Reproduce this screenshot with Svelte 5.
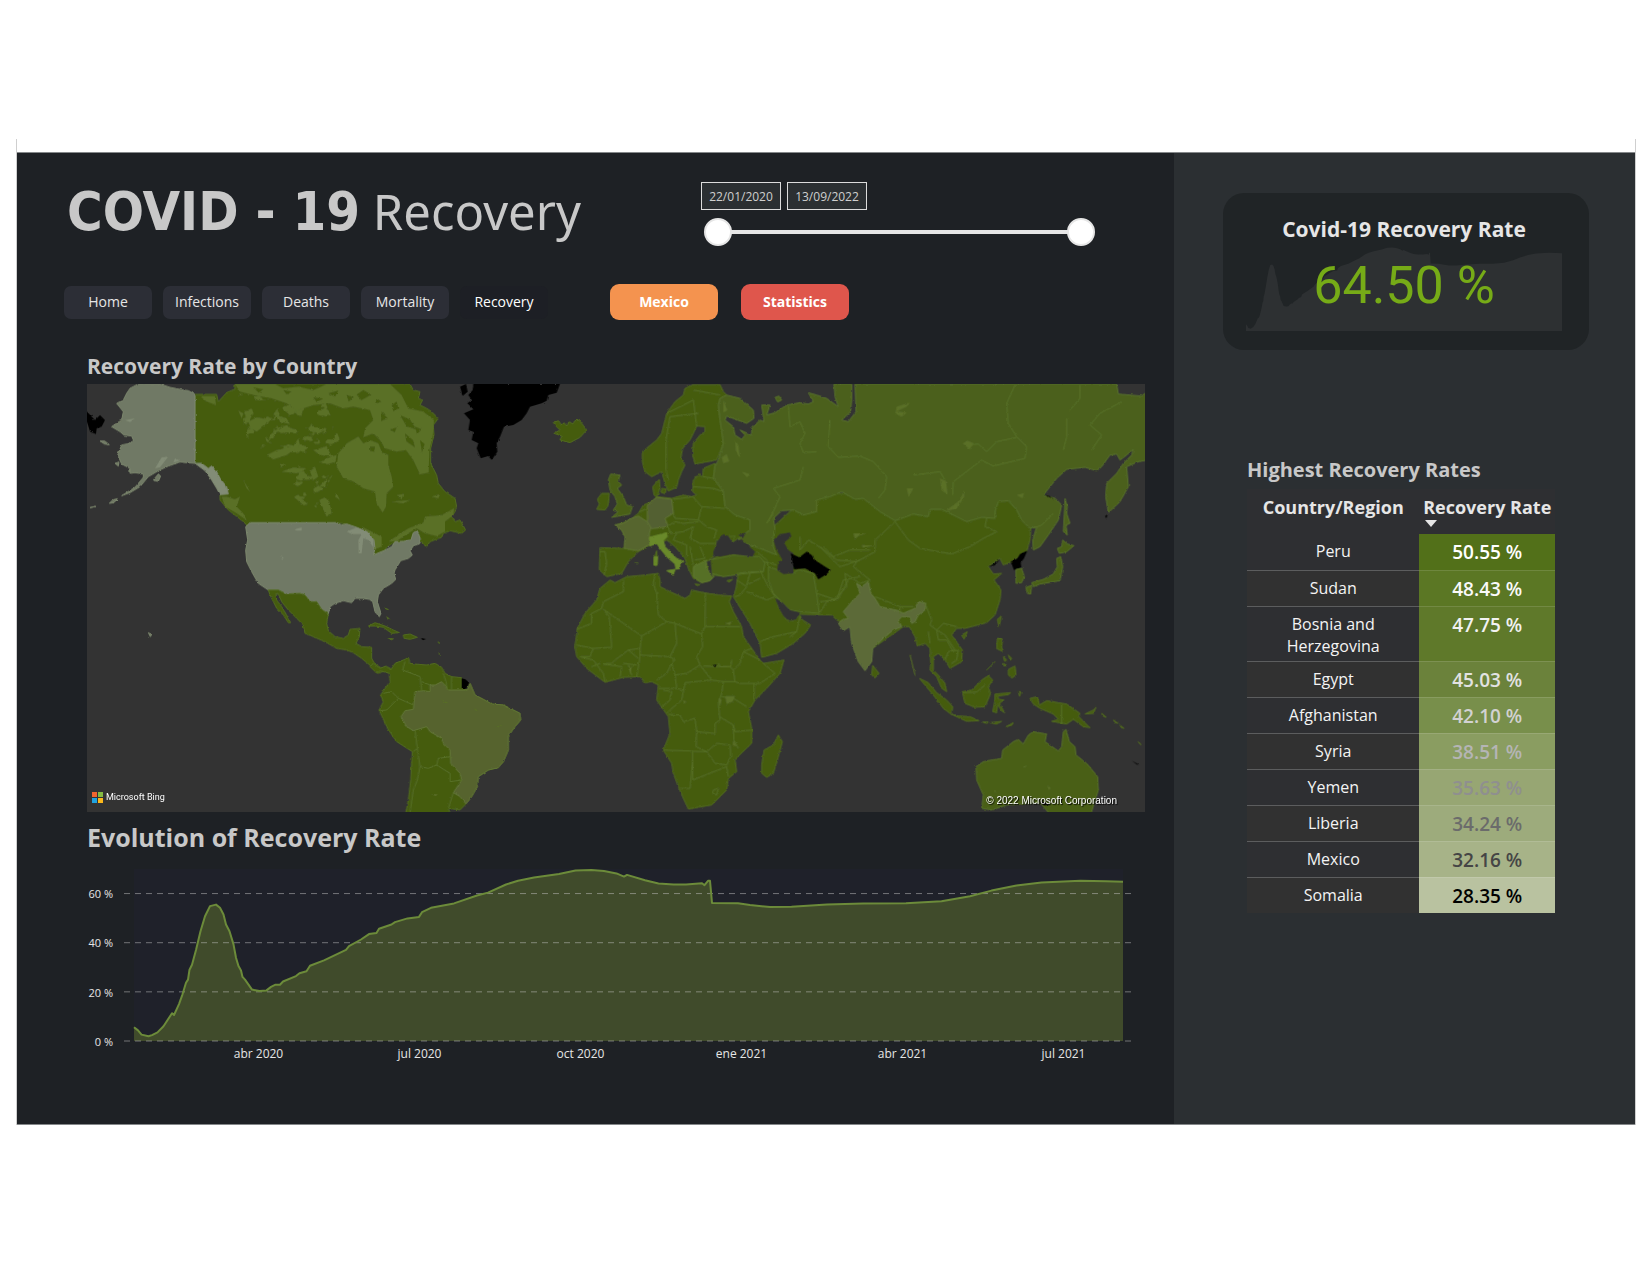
<script>
  const pages = ['Home', 'Infections', 'Deaths', 'Mortality', 'Recovery'];
  let active = $state('Recovery');
  let from = $state(0);
  let to = $state(100);

  const rates = [
    { name: 'Peru', rate: '50.55 %', tone: 't1' },
    { name: 'Sudan', rate: '48.43 %', tone: 't2' },
    { name: 'Bosnia and Herzegovina', rate: '47.75 %', tone: 't3' },
    { name: 'Egypt', rate: '45.03 %', tone: 't4' },
    { name: 'Afghanistan', rate: '42.10 %', tone: 't5' },
    { name: 'Syria', rate: '38.51 %', tone: 't6' },
    { name: 'Yemen', rate: '35.63 %', tone: 't7' },
    { name: 'Liberia', rate: '34.24 %', tone: 't8' },
    { name: 'Mexico', rate: '32.16 %', tone: 't9' },
    { name: 'Somalia', rate: '28.35 %', tone: 't10' }
  ];

  // [position along the period, recovery rate in percent]
  const series = [
    [0, 5.6], [4, 4.3], [7.5, 2.6], [14.5, 1.9], [18, 2.4], [23.5, 3.5], [29.5, 6], [38, 11.3], [40, 10.6], [45, 15],
    [48.5, 19], [52, 23.7], [54, 25], [55.5, 29], [58, 31], [62, 37], [66.5, 44.7], [71, 50.8], [76, 54.9], [82, 55.5],
    [86, 54.2], [89.5, 51.5], [92, 47.4], [95.5, 44.7], [99.5, 39.3], [102, 33.9], [104.5, 30.5], [107, 28.7],
    [108.5, 26.1], [111, 25], [118, 20.9], [125.5, 20.3], [132.5, 20.6], [137, 22], [141.5, 22.9], [146, 22.9],
    [149, 24.2], [162, 26.4], [165.5, 27.6], [172.5, 28.4], [176, 30.6], [190, 32.8], [212, 37.1], [215, 38.6],
    [227, 41.3], [235, 43.5], [242.5, 44], [245, 45.7], [257.5, 47.4], [261, 48.4], [273.5, 49.9], [285, 50.5],
    [288, 52.4], [297, 54.2], [320, 56], [343, 59.2], [354, 60.4], [372, 63.7], [384, 65.2], [400, 66.5], [425, 68],
    [441.5, 69.4], [457.5, 69.6], [470, 69.2], [482.5, 68.2], [490, 66.9], [493, 67.6], [511, 65.4], [524.5, 64.1],
    [539.5, 63.7], [552, 63.7], [568, 64.2], [570.5, 63.4], [574, 65.2], [576, 65.2], [578, 56.2], [604, 56.1],
    [616, 55.4], [636, 54.5], [657.5, 54.6], [693, 55.5], [729, 56], [772, 56.1], [807.5, 56.9], [836, 58.9],
    [857.5, 61.2], [882.5, 63.3], [907.5, 64.5], [946.5, 65.2], [972, 65], [989, 64.8]
  ];
  const trace = (h, max) =>
    series.map(([x, v], i) => `${i ? 'L' : 'M'}${x} ${(h - (v * h) / max).toFixed(1)}`).join('');
  const area = (h, max) => `${trace(h, max)}V${h}H0Z`;
  const gridRows = [60, 40, 20, 0];
  const months = ['abr 2020', 'jul 2020', 'oct 2020', 'ene 2021', 'abr 2021', 'jul 2021'];
</script>

<div class="page">
  <div class="frame">
    <div class="dashboard">
      <main>
        <header>
          <h1><strong>COVID - 19</strong> <span>Recovery</span></h1>
          <div class="period">
            <div class="dates">
              <input type="text" aria-label="Start date" value="22/01/2020" />
              <input type="text" aria-label="End date" value="13/09/2022" />
            </div>
            <div class="slider">
              <input type="range" aria-label="Period start" min="0" max="100" bind:value={from} />
              <input type="range" aria-label="Period end" min="0" max="100" bind:value={to} />
            </div>
          </div>
        </header>

        <nav>
          {#each pages as page}
            <button class="tab" class:active={active === page} onclick={() => (active = page)}>{page}</button>
          {/each}
          <button class="action mexico">Mexico</button>
          <button class="action statistics">Statistics</button>
        </nav>

        <section class="panel">
          <h2>Recovery Rate by Country</h2>
          <div class="map">
            <svg viewBox="0 0 3174 1284" preserveAspectRatio="xMidYMid slice" role="img" aria-label="World map of recovery rates">
              <defs>
                <filter id="coast" x="0" y="0" width="3174" height="1284" filterUnits="userSpaceOnUse">
                  <feTurbulence type="fractalNoise" baseFrequency="0.09" numOctaves="2" seed="4" result="n" />
                  <feDisplacementMap in="SourceGraphic" in2="n" scale="7" xChannelSelector="R" yChannelSelector="G" />
                </filter>
                <filter id="tundra" color-interpolation-filters="sRGB">
                  <feTurbulence type="fractalNoise" baseFrequency="0.025 0.035" numOctaves="3" seed="11" />
                  <feColorMatrix values="0 0 0 0 0.353  0 0 0 0 0.435  0 0 0 0 0.157  14 0 0 0 -8.2" />
                  <feComposite in2="SourceAlpha" operator="in" />
                </filter>
              </defs>
              <rect width="3174" height="1284" fill="#333333" />
              <g filter="url(#coast)">
                <!-- North America -->
                <g transform="translate(-21 -132)">
                  <path class="land" d="M345 163L410 163L415 185L440 158L465 147L465 132L990 132L1000 150L1020 155L1015 175L1028 180L1020 195L1040 205L1055 215L1075 235L1060 255L1062 285L1052 325L1052 370L1070 405L1075 430L1095 455L1125 475L1130 500L1125 515L1115 530L1125 545L1140 540L1157 570L1145 580L1110 572L1090 580L1085 592L1050 605L1040 620L1028 612L1015 575L1000 578L993 600L970 604L945 605L920 622L912 632L880 645L885 625L880 600L860 575L830 565L800 552L770 548L510 548L505 560L490 545L465 525L445 510L420 480L420 464L445 462L440 440L420 415L410 395L395 378L385 385L365 370L345 370Z" />
                  <path filter="url(#tundra)" d="M470 145L720 145L780 300L760 400L700 520L640 470L600 380L500 290Z" />
                  <g class="lake">
                    <path d="M835 290L850 310L870 300L895 310L905 335L925 345L925 375L935 410L940 440L920 460L918 500L908 518L890 490L885 455L850 445L820 425L790 415L770 380L775 340L800 310Z" />
                    <path d="M465 132L585 132L610 145L655 140L700 150L740 132L930 132L965 165L985 205L1030 215L1062 240L1058 290L1048 330L1046 398L1020 403L1000 360L978 330L950 335L915 325L900 300L880 280L850 292L855 265L880 240L870 210L820 200L790 205L750 190L700 195L650 212L620 190L575 175L520 165L480 155Z" />
                    <path d="M505 245L530 232L565 238L555 255L530 275L512 265Z M560 345L590 330L640 318L655 295L660 315L620 345L580 358Z M475 212L490 220L485 235Z M605 395L640 382L680 385L650 400Z M555 290L575 310L560 305Z M590 225L620 235L630 252L600 245Z M690 395L705 380L715 410L700 420Z M718 480L735 472L748 485L755 520L740 530L728 505Z M718 440L742 415L735 440Z M480 470L465 478L440 470L425 470L435 500L470 520L500 540L490 520L470 500Z M490 420L510 455L500 445Z M700 330L740 318L755 350L720 345Z M950 465L970 462L965 478Z M935 485L990 480L970 490Z M1055 470L1080 462L1075 475Z M360 168L405 168L408 195L380 185Z M750 350L770 345L765 370Z M770 460L780 480L765 470Z" />
                    <path d="M925 605L985 565L1030 548L1035 530L1085 525L1122 505L1120 525L1095 545L1095 575L1070 588L1035 580L1010 565L985 580L950 603Z M845 560L905 590L905 620L885 628L880 600Z" />
                  </g>
                  <path class="dark" d="M935 195l15-10l5 20l-15 8z M870 320l15 0l-2 15l-12-2z M745 160l30-8l-10 18z M610 150l25 5l-15 8z M930 268l20-5l-6 14z M905 325l10 5l-8 10z M1005 260l20 8l-14 14z M700 172l30 4l-20 10z M850 150l24 14l-30 16l-14-16z M800 165l22 6l-16 14z M905 215l18 20l-20 8z M960 225l30 14l20 30l-30-10z M975 280l24 20l6 22l-26-18z M520 142l30 6l-14 10z M890 175l14 10l-18 6z M1020 300l14 12l-8 24z" />
                  <path class="usa" d="M150 145L175 132L240 132L270 142L310 150L325 152L345 163L345 370L300 366L265 378L235 392L205 410L180 440L150 458L125 467L165 442L190 412L190 402L165 398L150 400L150 385L125 372L113 345L125 315L150 310L160 300L155 288L132 285L120 275L95 260L125 240L130 215L110 190L130 180L140 160Z" />
                  <path class="usa" d="M220 420L235 402L242 408L235 424Z M88 490l10-10l14-4l-10 12z M60 303l14 0l14 11l-14-2z M105 370l12-4l-2 12z M30 503l16-4z M205 878l10 6l-4 6z" />
                  <path class="usa glacier" d="M345 370L365 370L385 385L395 378L410 395L420 415L440 440L445 462L420 464L410 445L395 420L375 392Z" />
                  <path class="usa" d="M510 548L770 548L785 555L800 552L830 562L860 575L882 600L885 625L880 645L912 632L935 620L945 605L970 604L993 600L1000 578L1012 572L1020 595L1020 610L1000 618L990 632L997 645L985 655L962 662L945 690L942 700L947 718L935 730L910 745L895 765L892 785L903 820L898 830L885 815L878 785L868 778L850 775L825 775L815 788L790 782L765 790L750 800L745 822L725 808L710 785L690 785L675 765L660 760L620 762L595 750L565 750L535 730L515 695L500 665L497 630L503 600L497 560Z" />
                  <path class="glacier" d="M800 575L830 562L862 575L880 598L880 622L865 600L850 595L845 640L836 640L835 600L845 582L815 582Z M643 568L665 562L665 572L650 572Z M600 645L612 655L606 656Z M225 385L245 352L265 350L240 382Z M285 355L300 362L280 368Z M135 240L165 235L150 246Z" />
                  <path class="land" d="M565 750L595 750L620 762L660 760L675 765L690 785L710 785L725 808L745 822L740 850L745 872L765 890L790 895L805 885L810 868L840 865L838 890L828 910L845 920L875 922L875 955L885 972L905 985L925 982L940 990L935 1002L915 992L895 1000L875 980L845 955L820 938L800 930L770 925L735 905L700 890L675 880L670 855L650 835L625 810L605 785L597 765L588 760L590 780L605 800L620 825L632 848L625 848L610 825L590 805L580 785L570 765Z" />
                  <path fill="#000" d="M21 215L45 240L60 225L75 240L65 260L50 265L48 282L30 275L21 245Z M165 858l14 4z" />
                </g>

                <!-- Atlantic and South America -->
                <g transform="translate(819 -12)">
                  <path class="land" d="M25 738L45 728L75 738L100 750L118 758L95 760L70 742L45 738Z M130 765L150 762L172 772L150 778L132 775Z M85 776L100 776L95 780Z M75 685l10 4z M80 710l8 8z M235 785l3 6z M236 820l4 4z" />
                  <path fill="#000" d="M340 12L600 12L590 38L565 45L560 62L545 70L510 80L500 100L485 120L460 135L432 140L420 170L410 190L412 215L395 240L385 228L362 235L350 205L355 190L335 180L340 155L325 150L330 120L312 100L340 88L322 70L335 60L325 45L338 30Z M300 20L318 12L323 35L308 48Z M183 774L198 777L188 781Z M175 733l14 6z" />
                  <path class="land" d="M580 128L595 122L605 135L612 128L620 138L628 125L638 132L645 122L658 120L665 130L680 150L660 172L630 188L600 180L605 168L582 160L600 150L590 140Z" />
                  <path class="land" d="M92 870L105 850L135 838L145 832L150 850L165 852L200 855L225 850L245 862L255 880L275 890L305 893L305 925L322 930L330 910L345 945L370 958L395 972L430 975L460 990L480 1000L482 1020L465 1040L445 1068L445 1110L430 1145L415 1163L385 1170L355 1190L352 1220L335 1250L315 1275L300 1290L265 1285L275 1310L135 1310L145 1260L152 1200L157 1115L110 1085L85 1050L57 990L70 965L62 945L75 925L90 905L88 880L60 872L50 880L30 860L40 850L60 865L78 858Z" />
                  <path class="brazil" d="M225 915L245 905L258 918L262 930L322 930L330 910L345 945L370 958L395 972L430 975L460 990L480 1000L482 1020L465 1040L445 1068L445 1110L430 1145L415 1163L385 1170L355 1190L352 1220L335 1250L318 1272L300 1250L280 1238L305 1200L300 1180L272 1150L270 1110L250 1090L245 1075L210 1055L200 1040L160 1052L140 1040L123 1010L135 992L160 988L165 935L190 932L210 935L210 915Z" />
                  <path class="line" d="M135 845L128 870L180 890L185 930 M70 940L95 935L115 955L80 990L60 992 M115 955L160 975 M165 1050L172 1105L160 1115 M172 1105L180 1160L205 1165L230 1155L235 1135L270 1130 M180 1160L172 1200L160 1230L150 1297 M230 1155L270 1180L270 1205L305 1200 M262 930L258 905L250 880 M275 890L275 928 M280 1238L265 1285 M185 905L210 915" />
                  <path class="lake" d="M240 958l25 10l-8 2z M340 984l12 6l-3 4z M408 1040l20-6l-10 8z M215 1243l18 0l-6 6z" />
                  <path fill="#000" d="M305 895L316 898L328 908L318 926L305 925Z" />
                </g>

                <!-- Europe, Middle East and Asia -->
                <g transform="translate(2139 528)">
                  <path class="land" d="M-80 -100L30 -200L700 -200L690 -60L680 -25L635 5L610 15L600 -5L565 20L580 42L605 40L582 60L603 90L600 120L585 165L560 188L495 205L470 205L455 225L487 270L485 305L450 325L435 300L415 280L400 290L400 330L415 345L435 370L440 395L425 385L410 350L390 330L392 310L390 265L375 250L352 258L345 230L328 200L310 200L218 265L180 300L150 200L110 180L95 165L5 163L-20 158L-50 130L-72 112L-65 140L-50 165L-40 180L-20 182L0 165L5 178L32 195L15 220L-20 250L-70 280L-115 292L-120 250L-150 190L-175 150L-200 110L-192 85L-185 40L-230 48L-265 45L-275 10L-260 -5L-240 -15L-160 -30Z" />
                </g>
                <g transform="translate(1419 -12)">
                  <path class="land" d="M375 25L400 14L480 14L490 35L500 45L480 55L475 75L480 120L485 150L490 190L470 240L405 252L398 225L400 190L420 165L435 155L435 140L410 138L400 160L390 180L368 205L362 235L375 255L365 275L355 300L350 322L325 333L315 310L305 275L275 290L255 275L247 245L247 215L290 180L305 160L320 100L345 65L370 45Z" />
                  <path class="land" d="M278 320L298 298L300 325L290 352L282 345Z M305 325l14 2l-4 14l-12-4z M405 290L425 290L422 310L408 300Z" />
                  <path class="land" d="M465 250L430 265L428 290L415 285L400 300L398 335L410 345L395 350L370 345L335 355L310 352L290 350L275 365L250 375L235 400L215 415L190 428L165 435L185 450L195 470L193 505L120 503L118 570L140 590L185 580L205 545L235 515L270 495L300 490L320 480L345 500L375 535L385 565L400 595L425 608L450 602L462 590L445 575L440 545L460 530L470 480L520 485L570 450L570 420L525 400L495 380L490 335L460 295Z" />
                  <path class="russia" d="M480 55L500 45L540 55L580 90L582 115L560 130L500 108L495 120L520 140L525 165L545 178L555 165L540 150L575 165L575 145L600 120L612 125L605 75L630 75L620 105L645 98L680 75L720 68L745 72L760 65L745 38L770 45L800 55L835 80L825 50L822 12L875 12L875 60L872 95L845 120L865 125L888 95L885 12L1670 12L1675 42L1745 48L1755 40L1765 40L1765 240L1735 245L1700 260L1705 320L1680 365L1645 398L1637 350L1640 310L1670 280L1690 250L1715 225L1720 208L1700 225L1680 240L1670 222L1650 225L1625 260L1610 272L1575 262L1520 268L1490 295L1450 345L1485 355L1505 375L1495 420L1465 465L1440 500L1420 510L1418 480L1430 440L1410 445L1385 420L1370 390L1345 362L1315 365L1305 395L1305 415L1265 412L1220 425L1190 410L1145 388L1110 388L1105 410L1060 402L1005 422L960 395L910 355L885 358L845 335L810 350L770 360L770 395L730 405L700 390L665 392L640 415L645 445L640 470L640 500L650 525L600 505L555 490L535 478L555 460L570 450L570 420L525 405L495 380L490 335L460 295L465 258L475 240L490 190L480 120L475 75Z" />
                  <path class="russia" d="M645 52l12-4l8 12l-12 6z M1515 355L1522 380L1520 400L1530 430L1518 435L1522 465L1510 455L1513 400Z" />
                  <path class="line" d="M685 80L690 140L720 125L735 160L720 190L730 218L770 215 M810 120L805 200L835 232L900 228L940 245L980 290L975 330L955 355 M1365 15L1340 70L1345 130L1370 170L1400 200L1395 235L1300 258L1265 240L1180 305L1178 345 M1370 172L1310 185L1280 215L1255 192L1225 195 M1560 15L1560 55L1530 90 M1520 115L1520 170L1510 210 M1685 65L1620 100L1590 135L1625 165L1595 210 M1060 285L1140 275L1155 300 M640 400L620 430 M660 350L640 325L720 300L730 260 M660 350L640 395L620 430" />
                  <path class="lake" d="M485 232l15-10l8 22l-18 6z M525 180l10 15l5 40l-12-20z M545 275l26 8l-10 8z M490 60l12 30l-12 8z M1208 190l15-8l18 8l-12 18z M1140 295l18 8l5 40l-18-12z M1160 390L1200 360L1213 330L1212 352L1190 385L1165 392Z M1370 345l22-6l-4 16z M1010 80l40-12l-10 12l-30 14l30 4l-14 12l-20-8z M1010 35l12 20z M1040 325l20 0l-14 26z M880 460l40 0l-22 6l-14 12z M905 495l40 2l-36 6z" />
                  <path class="uk" d="M152 282L180 285L175 305L185 315L172 325L190 350L200 375L217 380L210 402L155 412L175 395L160 390L172 372L165 350L150 330L145 300Z" />
                  <path class="land" d="M125 340L148 340L145 375L135 390L110 388L118 372L112 358Z M505 470L525 468L518 486Z M282 535L290 512L292 555L282 555Z M330 573L345 568L340 583Z M500 602L518 598L508 606Z M405 612L420 614L410 617Z M225 548l10 2z" />
                  <path class="france" d="M165 435L190 430L215 415L235 408L262 425L275 435L268 460L270 492L235 512L193 505L195 470L185 450Z" />
                  <path class="germany" d="M262 375L290 352L335 358L340 400L315 415L325 440L275 446L262 425Z" />
                  <path class="italy" d="M268 472L320 458L322 470L310 482L315 500L350 535L372 545L360 548L360 565L348 568L345 552L320 530L300 505L290 490L270 498Z M282 530L293 530L291 556L282 556Z M320 572L345 568L340 583Z" />
                  <path class="iran" d="M448 540L520 525L600 530L615 548L610 575L545 582L490 590L455 580Z" />
                  <path class="iran" d="M625 560L655 570L700 580L715 568L760 580L770 640L778 700L720 695L690 690L660 660L640 640L625 600Z" />
                  <path class="greece" d="M400 560L440 540L438 565L462 590L450 602L425 608L400 590Z" />
                  <path class="line" d="M415 100L330 110L318 180L318 270L325 300 M320 100L400 60L410 140 M400 30L480 45 M135 515L140 550L132 585 M120 515L135 515 M225 512L193 505 M240 395L262 385 M340 358L398 350L425 380L415 420L345 415L340 400 M400 320L460 325L490 335 M430 290L460 295 M425 380L495 385 M415 420L440 440L470 450L462 475 M320 440L345 425L370 430L415 425 M325 440L330 460L370 455L400 440L390 475L420 490L465 490 M350 460L340 480L380 495L380 530 M390 500L400 555 M420 500L435 535L405 540 M590 515L620 540L625 560 M610 545L650 555 M535 580L570 575L610 575 M530 600L560 620L540 645L525 650 M570 580L560 615L600 595 M600 570L625 620L645 650L620 660L560 635 M770 640L830 660L850 600L900 590 M778 700L800 665L835 655L865 600 M720 470L720 510L745 480L785 505L840 560L900 540 M600 785L640 770L710 755L720 710 M690 770L710 755" />
                  <path fill="#333333" d="M460 515L475 480L490 462L505 468L518 488L545 478L560 492L585 515L578 530L520 522L480 530L460 525Z M640 480L660 462L690 458L694 470L672 488L685 510L700 520L700 580L670 582L652 570L655 545L668 540L650 510Z M535 465L558 458L548 475Z M440 545L452 542L456 585L465 600L450 580Z M645 655L665 665L690 690L720 698L708 718L690 722L672 710L660 690Z" />
                  <path fill="#000" d="M692 520L718 532L740 515L755 525L765 540L795 560L812 570L800 582L775 598L765 580L735 565L702 568Z" />
                </g>
                <g transform="translate(2199 -12)">
                  <path class="line" d="M225 425L265 480L300 505L395 522L450 500L490 475L530 455L495 440L500 415 M225 425L165 480L165 515L110 545L50 540L0 500 M10 500L40 530L90 510L150 510 M110 545L100 560L150 600L120 610L75 580L80 620L40 660L0 665 M640 445L665 435L700 400" />
                  <path fill="#000" d="M572 545L592 535L600 522L622 512L612 535L602 548L604 562L582 570Z M505 560L520 552L540 537L524 556Z M668 342l20 6l15 10z M855 408l8-5l-4 12z" />
                  <path class="iran" d="M588 568L605 565L613 590L605 608L588 610Z M618 622L635 616L632 642L622 640Z M635 608L670 598L700 582L712 560L710 535L722 530L728 560L720 602L690 607L660 612L640 620Z M728 480L742 492L762 497L740 515L718 520L712 505L725 500Z" />
                </g>
                <g transform="translate(2139 528)">
                  <path class="india" d="M170 70L185 80L205 65L212 100L225 115L240 140L295 152L310 160L345 145L355 125L378 130L375 150L355 165L345 185L335 190L330 170L305 170L295 180L305 200L280 210L250 235L218 265L215 305L195 332L175 305L155 250L150 200L130 212L115 190L125 180L145 175L130 155L160 120L180 100Z" />
                  <path class="line" d="M225 110L300 140L340 140 M300 140L300 160 M375 130L395 180L390 195L410 210L430 190L470 200 M385 215L390 250 M410 210L435 225L465 270L445 275L435 300 M410 210L415 240L440 240L460 275L475 270L470 300L455 310" />
                  <path class="land" d="M218 316L237 340L225 354L215 345Z M485 225L502 215L492 238Z M592 178L604 168L597 200Z M358 355L385 368L410 398L440 420L458 440L455 464L430 445L400 405Z M455 463L480 468L510 470L537 482L500 484Z M548 486L565 486L560 490Z M570 488L605 484L590 492Z M618 500L640 488L635 496Z M487 395L515 390L545 360L565 347L578 360L565 380L572 400L555 440L525 442L495 430Z M585 402L632 398L625 404L594 408L596 418L612 420L598 430L614 458L604 452L593 432L590 458L578 455L584 425Z M592 235L608 238L605 260L610 275L590 266Z M625 328L645 318L648 345L636 354L625 345Z M610 290l10 10l-6 4z M625 285l10 10l-4 6z M610 310l10 6l-8 2z M560 330L585 305L565 325Z M655 395l8 0l-4 14z M690 415L712 410L718 435L740 422L800 432L840 460L835 468L870 503L850 500L820 478L800 492L755 484L775 478L760 462L720 445L700 432Z M855 462L880 450L888 442L880 460Z M905 460l14 12l-10-4z M940 480l14 10l-8-2z M960 495l12 10l-8-2z M1015 545l8 10z" />
                  <path class="uk" d="M608 570L640 545L655 538L670 552L685 525L700 515L740 522L735 545L775 573L785 560L790 515L798 508L808 545L825 560L828 585L860 610L893 650L895 690L870 770L755 770L735 745L720 728L620 735L575 750L545 745L550 705L530 660L528 620L550 605L605 595Z" />
                  <path class="line" d="M785 432L785 490 M490 398L530 396L555 375 M330 285L345 345" />
                  <path class="lake" d="M668 620l14-3l-8 6z M742 676l10 8l-6 6z M582 685l6 10l-4 2z" />
                  <path fill="#000" d="M995 602l22 12l-6 0z M565 568L597 540Z M642 438l20 2z M712 720l40 14l-20 2z" />
                </g>

                <!-- Africa -->
                <g transform="translate(1419 528)">
                  <path class="land" d="M150 60L165 68L200 50L255 45L295 40L300 60L300 80L330 95L375 115L390 105L395 90L430 98L480 105L515 108L508 125L520 155L545 200L550 230L575 265L600 300L610 310L672 300L660 340L620 385L585 420L565 455L575 505L575 550L525 598L530 635L505 655L500 690L455 735L385 747L370 715L355 680L340 640L335 610L310 570L330 520L325 470L290 420L295 375L275 365L255 368L240 350L190 352L135 367L80 325L50 290L45 260L52 205L75 160L110 120L120 85Z M655 525L667 545L655 590L640 640L620 652L605 640L605 615L612 570L640 555Z" />
                  <path class="line" d="M190 60L190 95L130 125L125 145L95 160L95 190L50 208 M130 148L245 228L320 185L345 190L425 222L435 200L436 98 M436 200L540 200 M320 185L295 165L290 100L280 70L285 42 M148 170L155 262L100 265L50 255 M148 170L130 148 M245 228L240 265L205 270L165 300L155 310L130 312 M240 265L240 290L230 350 M240 285L330 290L350 250L345 190 M425 222L428 260L410 290L420 315L380 340L345 345L335 310L345 300L330 290 M335 310L320 340L290 360 M345 345L350 385L298 385 M420 315L455 360L490 365L525 365L520 330L510 320L430 318 M515 300L512 320L480 320L475 310 M575 265L550 275L540 310L520 330 M550 275L600 300 M610 310L645 340L600 370L540 370L525 365 M582 370L582 420 M375 368L455 360 M375 368L365 420L330 450L320 460 M350 385L370 390 M325 463L360 465L370 485L405 475L410 515L408 560L440 575L312 570 M410 515L465 520L465 490L480 480L475 430L485 400L490 365 M485 410L520 415L560 440 M478 470L520 495L525 515L575 510 M520 495L522 540L535 565 M440 575L470 550L510 555L512 590L500 615L465 610L455 595L440 575 M398 575L398 660L500 620L505 650 M398 600L390 685L360 685 M460 690L475 685L470 705L458 700Z M100 265L90 290L60 290 M60 290L100 300L130 340L135 365 M95 320L120 310 M130 312L185 320L180 350 M205 270L235 295 M205 315L215 345 M190 310L230 315 M310 390L335 395L330 420L300 445" />
                  <path class="lake" d="M495 408L525 408L518 425L500 432Z M475 415L485 418L480 440Z M495 190L515 185L510 195Z M205 320L215 320L212 345Z M370 420L378 425L372 432Z M520 540L530 560L518 555Z" />
                  <path fill="#000" d="M458 315L470 314L465 321Z M712 605l6 2z" />
                </g>
              </g>
            </svg>
            <div class="bing">
              <svg viewBox="0 0 11 11" aria-hidden="true">
                <rect width="5" height="5" fill="#f0652f" /><rect x="6" width="5" height="5" fill="#84bb41" />
                <rect y="6" width="5" height="5" fill="#20a3e0" /><rect x="6" y="6" width="5" height="5" fill="#fbb81b" />
              </svg>
              <span>Microsoft Bing</span>
            </div>
            <div class="copyright">© 2022 Microsoft Corporation</div>
          </div>
        </section>

        <section class="panel">
          <h2 class="large">Evolution of Recovery Rate</h2>
          <div class="chart">
            <div class="y-axis">
              {#each gridRows as v}<span>{v} %</span>{/each}
            </div>
            <svg class="plot" viewBox="-10 0 1010 173" preserveAspectRatio="none" role="img" aria-label="Recovery rate over time">
              <rect width="989" height="172" fill="#1f212a" />
              <path d={area(172, 70)} fill="#404b2b" />
              {#each gridRows as v}
                <line class="grid" x1="-10" x2="999" y1={172 - (v * 172) / 70} y2={172 - (v * 172) / 70} />
              {/each}
              <path class="curve" d={trace(172, 70)} />
            </svg>
            <div class="x-axis">
              {#each months as m}<span>{m}</span>{/each}
            </div>
          </div>
        </section>
      </main>

      <aside>
        <section class="card">
          <h3>Covid-19 Recovery Rate</h3>
          <div class="kpi">
            <svg viewBox="0 0 989 84" preserveAspectRatio="none" aria-hidden="true">
              <path d={area(84, 70)} fill="#2d3032" />
            </svg>
            <p>64.50 %</p>
          </div>
        </section>

        <section class="ranking">
          <h3>Highest Recovery Rates</h3>
          <table>
            <thead>
              <tr>
                <th>Country/Region</th>
                <th aria-sort="descending">
                  <button>Recovery Rate<svg viewBox="0 0 12 7" aria-hidden="true"><path d="M0 0H12L6 7Z" fill="#e6e6e6" /></svg></button>
                </th>
              </tr>
            </thead>
            <tbody>
              {#each rates as row}
                <tr>
                  <td>{row.name}</td>
                  <td class={row.tone}>{row.rate}</td>
                </tr>
              {/each}
            </tbody>
          </table>
        </section>
      </aside>
    </div>
  </div>
</div>

<style>
  :global(body) {
    margin: 0;
    background: #ffffff;
  }
  .page {
    padding: 139px 14px 151px 16px;
    font-family: 'Open Sans', 'Noto Sans', sans-serif;
    color: #e6e6e6;
  }
  .frame {
    padding-top: 13px;
    border: 0 solid #cfcfcf;
    border-width: 0 1px;
  }
  .dashboard {
    display: grid;
    grid-template-columns: minmax(0, 1fr) 461px;
    border-top: 1px solid #85888a;
    border-bottom: 1px solid #85888a;
  }
  main {
    background: #1e2125;
    padding: 22px 29px 62px 47px;
  }
  aside {
    background: #2b2f32;
    padding: 40px 46px 40px 49px;
  }
  h1, h2, h3, p {
    margin: 0;
  }
  button, input {
    font-family: inherit;
    margin: 0;
    box-sizing: border-box;
  }
  header {
    display: grid;
    grid-template-columns: 637px minmax(0, 394px);
    min-height: 109px;
    align-items: start;
  }
  h1 {
    padding: 4px 0 0 3px;
    font: 400 49px/64px 'Noto Sans', 'Open Sans', sans-serif;
    color: #c8c8c8;
    white-space: nowrap;
  }
  h1 strong {
    font: 700 54px/64px 'DejaVu Sans Condensed', 'Noto Sans', sans-serif;
  }
  .period {
    padding-top: 7px;
  }
  .dates {
    display: flex;
    gap: 6px;
  }
  .dates input {
    width: 80px;
    height: 28px;
    padding: 0;
    border: 1px solid #dcdcdc;
    background: #2b2f32;
    color: #cfcfcf;
    font-size: 12px;
    text-align: center;
  }
  .slider {
    display: grid;
    margin: 8px 0 0 3px;
    background: linear-gradient(#e6e6e6, #e6e6e6) center / calc(100% - 28px) 4px no-repeat;
  }
  .slider input {
    grid-area: 1 / 1;
    width: 100%;
    height: 28px;
    appearance: none;
    background: none;
    pointer-events: none;
  }
  .slider input::-webkit-slider-thumb {
    appearance: none;
    width: 28px;
    height: 28px;
    border: 2px solid #e6e6e6;
    border-radius: 50%;
    background: #ffffff;
    pointer-events: auto;
  }
  nav {
    display: flex;
    align-items: center;
    gap: 11px;
  }
  .tab {
    width: 88px;
    height: 33px;
    padding: 0 0 2px;
    border: 0;
    border-radius: 7px;
    background: #2c2e36;
    color: #e6e6e6;
    font-size: 14px;
  }
  .tab.active {
    background: #1d1f25;
    color: #ffffff;
  }
  .action {
    width: 108px;
    height: 36px;
    padding: 0 0 2px;
    border: 0;
    border-radius: 9px;
    color: #ffffff;
    font-size: 14px;
    font-weight: 700;
  }
  .mexico {
    margin-left: 51px;
    background: #f4934f;
  }
  .statistics {
    margin-left: 12px;
    background: #df564c;
  }
  .panel {
    padding-left: 23px;
  }
  h2 {
    margin: 32px 0 4px;
    font-size: 21px;
    line-height: 28px;
    font-weight: 700;
    color: #c8c8c8;
  }
  h2.large {
    margin: 8px 0 15px;
    font-size: 25px;
    line-height: 34px;
  }
  .map {
    position: relative;
  }
  .map > svg {
    display: block;
    width: 100%;
  }
  .map path {
    stroke-width: 3;
    stroke-linejoin: round;
  }
  .land { fill: #455b11; stroke: #526c20; }
  .dark { fill: #455b11; }
  .russia { fill: #4c611e; stroke: #58722c; }
  .uk, .iran { fill: #495f19; stroke: #587229; }
  .brazil { fill: #56642f; stroke: #627636; }
  .france { fill: #56652f; stroke: #627636; }
  .germany { fill: #536030; stroke: #627636; }
  .india { fill: #5b6a37; stroke: #667a40; }
  .greece { fill: #577028; stroke: #627a30; }
  .italy { fill: #69892a; stroke: #69892a; }
  .usa { fill: #707965; stroke: #7d886e; }
  .glacier { fill: #828c76; }
  .lake { fill: #5a6f28; }
  .line { fill: none; stroke: #587127; }
  .bing {
    position: absolute;
    left: 5px;
    bottom: 8px;
    display: flex;
    align-items: center;
    gap: 3px;
    font: 9px/14px Roboto, 'Open Sans', sans-serif;
    color: #ffffff;
  }
  .bing svg {
    width: 11px;
    height: 11px;
  }
  .copyright {
    position: absolute;
    right: 28px;
    bottom: 4px;
    font: 10px/14px 'Liberation Sans', sans-serif;
    color: #ffffff;
    text-shadow: 1px 1px 1px #000000;
  }
  .chart {
    display: grid;
    grid-template-columns: 26px minmax(0, 1fr);
    column-gap: 11px;
    font-size: 12px;
    line-height: 16px;
    margin-right: 11px;
  }
  .y-axis {
    display: flex;
    flex-direction: column;
    justify-content: space-between;
    padding-top: 17px;
    margin-bottom: -8px;
    text-align: right;
    white-space: nowrap;
    font-size: 11px;
  }
  .plot {
    display: block;
    width: 100%;
    height: 173px;
  }
  .grid {
    stroke: #c8c8c8;
    stroke-opacity: 0.5;
    stroke-dasharray: 6 5;
    vector-effect: non-scaling-stroke;
  }
  .curve {
    fill: none;
    stroke: #6c8b3a;
    stroke-width: 2;
    stroke-linejoin: round;
    vector-effect: non-scaling-stroke;
  }
  .x-axis {
    grid-column: 2;
    display: grid;
    grid-template-columns: repeat(6, 1fr);
    margin: 4px -10px 0 54px;
    text-align: center;
  }
  .card {
    padding: 23px 27px 19px 23px;
    border-radius: 21px;
    background: #202426;
    text-align: center;
  }
  h3 {
    font-size: 20px;
    line-height: 26px;
    font-weight: 700;
    white-space: nowrap;
  }
  .card h3 {
    font-size: 21px;
  }
  .kpi {
    display: grid;
    margin-top: 5px;
  }
  .kpi svg {
    grid-area: 1 / 1;
    width: 100%;
    height: 84px;
  }
  .kpi p {
    grid-area: 1 / 1;
    font: 52px/78px Roboto, sans-serif;
    color: #76ab17;
  }
  .ranking {
    margin: 107px 34px 0 24px;
  }
  .ranking h3 {
    color: #c8c8c8;
    margin-bottom: 6px;
  }
  table {
    width: 100%;
    table-layout: fixed;
    border-collapse: collapse;
    text-align: center;
    background: #2e2f32;
  }
  th {
    height: 45px;
    padding: 5px 0 0;
    box-sizing: border-box;
    vertical-align: top;
    font-size: 18px;
    line-height: 26px;
    font-weight: 700;
  }
  th:first-child {
    width: 56%;
  }
  th button {
    width: 100%;
    padding: 0;
    border: 0;
    background: none;
    color: inherit;
    font-size: 18px;
    line-height: 26px;
    font-weight: 700;
    white-space: nowrap;
  }
  th svg {
    display: block;
    width: 12px;
    height: 7px;
    margin-left: 6px;
  }
  td {
    height: 36px;
    box-sizing: border-box;
    padding: 6px 16px 4px;
    border-bottom: 1px solid #5c5d5e;
    vertical-align: top;
    font-size: 16px;
    line-height: 22px;
    color: #f4f4f4;
  }
  td + td {
    padding: 7px 0 4px;
    border-bottom-color: rgba(255, 255, 255, 0.12);
    font-size: 19px;
    font-weight: 600;
  }
  tr:nth-child(even) td {
    background: #313131;
  }
  tr:last-child td {
    border-bottom: 0;
  }
  tbody tr .t1 { background: #527019; color: #ffffff; }
  tbody tr .t2 { background: #5b7724; color: #fafafa; }
  tbody tr .t3 { background: #5f792a; color: #f2f2f2; }
  tbody tr .t4 { background: #6b823b; color: #e2e2e2; }
  tbody tr .t5 { background: #788f4b; color: #d2d2d2; }
  tbody tr .t6 { background: #8a9d61; color: #b5b5b5; }
  tbody tr .t7 { background: #97a673; color: #8f8f8f; }
  tbody tr .t8 { background: #9dab7c; color: #6b6b6b; }
  tbody tr .t9 { background: #a7b388; color: #454545; }
  tbody tr .t10 { background: #b9c2a0; color: #000000; }
</style>
